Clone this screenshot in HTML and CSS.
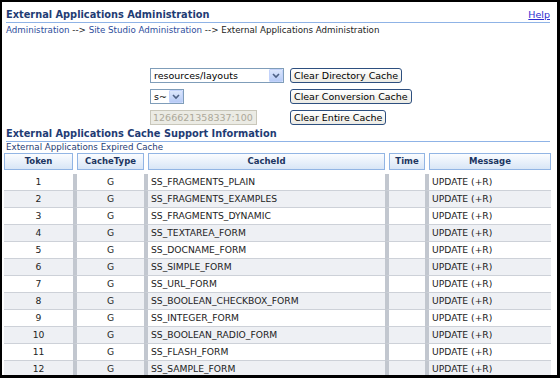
FILE: index.html
```html
<!DOCTYPE html>
<html>
<head>
<meta charset="utf-8">
<title>External Applications Administration</title>
<link rel="stylesheet" href="styles.css">
</head>
<body>
<div class="frame">
  <div class="page-head">
    <h1>External Applications Administration</h1>
    <a class="help" href="#">Help</a>
  </div>
  <div class="crumbs"><a href="#">Administration</a> --&gt; <a href="#">Site Studio Administration</a> --&gt; External Applications Administration</div>

  <div class="controls">
    <div class="select wide"><span class="val">resources/layouts</span><span class="arrow"><svg width="8" height="6" viewBox="0 0 8 6"><polyline points="1,1 4,4 7,1" fill="none" stroke="#4d6185" stroke-width="1.6"/></svg></span></div>
    <button class="btn" type="button">Clear Directory Cache</button>
    <div class="select small"><span class="val">s~</span><span class="arrow"><svg width="8" height="6" viewBox="0 0 8 6"><polyline points="1,1 4,4 7,1" fill="none" stroke="#4d6185" stroke-width="1.6"/></svg></span></div>
    <button class="btn" type="button">Clear Conversion Cache</button>
    <div class="input-disabled">1266621358337:100</div>
    <button class="btn" type="button">Clear Entire Cache</button>
  </div>

  <h2>External Applications Cache Support Information</h2>
  <div class="sub">External Applications Expired Cache</div>

  <table class="cache">
    <colgroup>
      <col class="w-token"><col class="w-type"><col class="w-id"><col class="w-time"><col class="w-msg">
    </colgroup>
    <thead>
      <tr><th>Token</th><th>CacheType</th><th>CacheId</th><th>Time</th><th>Message</th></tr>
    </thead>
    <tbody>
      <tr><td class="c">1</td><td class="c">G</td><td>SS_FRAGMENTS_PLAIN</td><td></td><td>UPDATE (+R)</td></tr>
      <tr><td class="c">2</td><td class="c">G</td><td>SS_FRAGMENTS_EXAMPLES</td><td></td><td>UPDATE (+R)</td></tr>
      <tr><td class="c">3</td><td class="c">G</td><td>SS_FRAGMENTS_DYNAMIC</td><td></td><td>UPDATE (+R)</td></tr>
      <tr><td class="c">4</td><td class="c">G</td><td>SS_TEXTAREA_FORM</td><td></td><td>UPDATE (+R)</td></tr>
      <tr><td class="c">5</td><td class="c">G</td><td>SS_DOCNAME_FORM</td><td></td><td>UPDATE (+R)</td></tr>
      <tr><td class="c">6</td><td class="c">G</td><td>SS_SIMPLE_FORM</td><td></td><td>UPDATE (+R)</td></tr>
      <tr><td class="c">7</td><td class="c">G</td><td>SS_URL_FORM</td><td></td><td>UPDATE (+R)</td></tr>
      <tr><td class="c">8</td><td class="c">G</td><td>SS_BOOLEAN_CHECKBOX_FORM</td><td></td><td>UPDATE (+R)</td></tr>
      <tr><td class="c">9</td><td class="c">G</td><td>SS_INTEGER_FORM</td><td></td><td>UPDATE (+R)</td></tr>
      <tr><td class="c">10</td><td class="c">G</td><td>SS_BOOLEAN_RADIO_FORM</td><td></td><td>UPDATE (+R)</td></tr>
      <tr><td class="c">11</td><td class="c">G</td><td>SS_FLASH_FORM</td><td></td><td>UPDATE (+R)</td></tr>
      <tr><td class="c">12</td><td class="c">G</td><td>SS_SAMPLE_FORM</td><td></td><td>UPDATE (+R)</td></tr>
    </tbody>
  </table>
</div>
</body>
</html>
```

FILE: styles.css
```css
* { box-sizing: border-box; }
html, body { margin: 0; padding: 0; background: #fff; }

.frame {
  width: 560px;
  height: 378px;
  border: 2px solid #000;
  border-right-width: 3px;
  border-bottom-width: 3px;
  overflow: hidden;
  background: #fff;
  font-family: "DejaVu Sans", Verdana, sans-serif;
}

.page-head {
  display: flex;
  justify-content: space-between;
  align-items: flex-end;
  margin: 0 7px 0 4px;
  padding-top: 6px;
  height: 21px;
  border-bottom: 1px solid #8fb3e6;
}
.page-head h1 {
  margin: 0;
  font-size: 9.8px;
  font-weight: bold;
  line-height: 14px;
  color: #1f3c74;
}
.help {
  font-size: 9.5px;
  line-height: 14px;
  color: #2b2bd0;
  text-decoration: underline;
}

.crumbs {
  margin: 1px 0 0 4px;
  font-size: 8.7px;
  line-height: 12px;
  color: #222;
}
.crumbs a { color: #2d4d9c; text-decoration: none; }

.controls {
  display: grid;
  grid-template-columns: 140px auto;
  grid-auto-rows: 15px;
  row-gap: 6px;
  margin: 32px 0 0 148px;
  justify-items: start;
  align-items: stretch;
}
.select {
  display: flex;
  align-items: center;
  height: 15px;
  border: 1px solid #7f9db9;
  background: #fff;
  font-size: 9.5px;
  color: #000;
}
.select .val { flex: 1; padding-left: 3px; white-space: nowrap; }
.select .arrow {
  width: 14px;
  height: 13px;
  display: flex;
  align-items: center;
  justify-content: center;
  background: linear-gradient(#dce7fc, #b7cbf6);
  border: 1px solid #c3d3fb;
  border-radius: 1px;
}
.select.wide { width: 134px; }
.select.small { width: 34px; }

.input-disabled {
  width: 107px;
  height: 15px;
  border: 1px solid #c9c7ba;
  background: #ebebe4;
  color: #aca899;
  font-size: 9.5px;
  line-height: 13px;
  padding-left: 2px;
  white-space: nowrap;
  overflow: hidden;
}

.btn {
  height: 15px;
  padding: 0 3px;
  margin: 0;
  border: 1px solid #2d4f7f;
  border-radius: 3px;
  background: linear-gradient(#ffffff, #ecebe4);
  font-family: "DejaVu Sans", Verdana, sans-serif;
  font-size: 9.5px;
  line-height: 13px;
  color: #000;
}

h2 {
  margin: 3px 7px 0 4px;
  padding-bottom: 1px;
  font-size: 9.8px;
  font-weight: bold;
  line-height: 12px;
  color: #1f3c74;
  border-bottom: 1px solid #8fb3e6;
}
.sub {
  margin-left: 4px;
  font-size: 8.7px;
  line-height: 11px;
  color: #1f3c74;
}

.cache {
  margin-left: 2px;
  width: 547px;
  table-layout: fixed;
  border-collapse: separate;
  border-spacing: 0;
}
.w-token { width: 69px; }
.w-type { width: 71px; }
.w-id { width: 241px; }
.w-time { width: 40px; }
.w-msg { width: 126px; }

.cache th {
  padding: 0;
  line-height: 17px;
  font-size: 8.5px;
  font-weight: bold;
  color: #1c3561;
  background: linear-gradient(#fdfeff, #d6e4f6);
  background-clip: padding-box;
  box-shadow: inset 0 0 0 1px #92b5e4;
  border-bottom: 4px solid #fff;
}
.cache th + th { border-left: 4px solid #fff; }

.cache td {
  padding: 0 3px;
  line-height: 16px;
  font-size: 9.2px;
  color: #222;
  white-space: nowrap;
  border-bottom: 1px solid #cdd1d8;
}
.cache td + td { border-left: 4px solid #c2c7cf; }
.cache tbody tr:nth-child(even) td { background-color: #eef0f4; }
.cache td.c { text-align: center; }
```
